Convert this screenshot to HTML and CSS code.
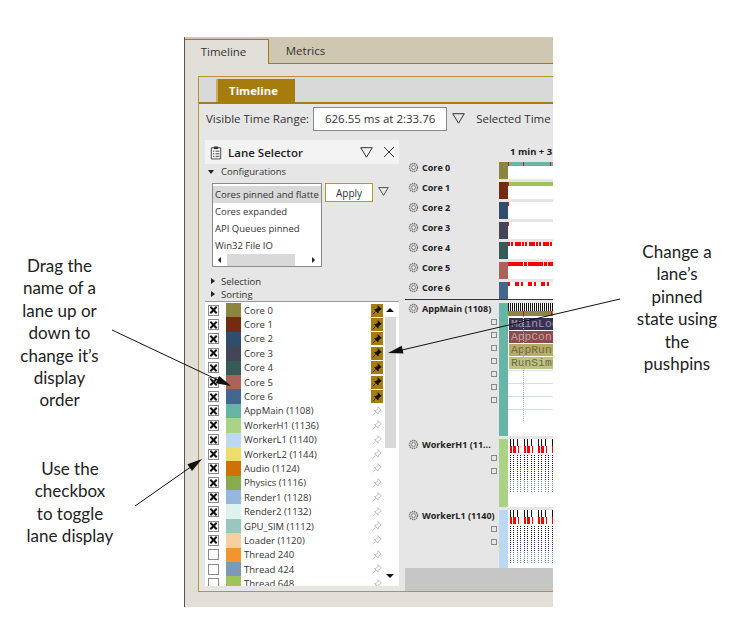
FILE: index.html
```html
<!DOCTYPE html>
<html lang="en">
<head>
<meta charset="utf-8">
<title>Lane Selector</title>
<link rel="stylesheet" href="styles.css">
</head>
<body>
<svg width="0" height="0" class="defs">
  <defs>
    <symbol id="tri" viewBox="0 0 13 11"><path d="M.7.7h11.600L6.500 10.200z" fill="none" stroke="#333" stroke-width="1"/></symbol>
    <symbol id="gear" viewBox="0 0 11 11"><circle cx="5.500" cy="5.500" r="4" fill="none" stroke="#7a7a7a" stroke-width="1.500" stroke-dasharray="1.500 .6"/><circle cx="5.500" cy="5.500" r="2" fill="none" stroke="#7a7a7a" stroke-width=".9"/></symbol>
    <symbol id="pin" viewBox="0 0 11 11"><path d="M6.500.8l3.700 3.700-1.200.5-2 2-.3 1.900-3.900-3.900 1.900-.3 2-2zM3.900 7.100L.8 10.200" fill="currentColor" stroke="currentColor" stroke-width=".8"/></symbol>
    <symbol id="pinoff" viewBox="0 0 11 11"><path d="M6.500.8l3.700 3.700-1.200.5-2 2-.3 1.900-3.900-3.900 1.900-.3 2-2zM3.900 7.100L.8 10.200" fill="none" stroke="#aaa" stroke-width=".8"/></symbol>
  </defs>
</svg>

<main class="shell">
  <nav class="doc-tabs">
    <div class="doc-tab active">Timeline</div>
    <div class="doc-tab">Metrics</div>
  </nav>
  <div class="doc-body">
    <section class="panel">
      <div class="panel-tabs"><div class="panel-tab">Timeline</div></div>
      <div class="toolbar">
        <span>Visible Time Range:</span>
        <div class="range-input">626.55 ms at 2:33.76</div>
        <svg class="tri"><use href="#tri"/></svg>
        <span class="selected">Selected Time</span>
      </div>
      <div class="workspace">
        <aside class="selector">
          <header class="sel-head">
            <svg class="clip" viewBox="0 0 14 16"><path d="M1.500 2.500h11v13h-11z" fill="none" stroke="#333"/><path d="M4.500 1h5v3h-5z" fill="#333"/><path d="M3.500 6.500h1.500M3.500 9.500h1.500M3.500 12.500h1.500M6.500 6.500h4.500M6.500 9.500h4.500M6.500 12.500h4.500" stroke="#333"/></svg>
            <strong>Lane Selector</strong>
            <svg class="tri"><use href="#tri"/></svg>
            <svg class="close" viewBox="0 0 12 12"><path d="M1 1l10 10M11 1L1 11" stroke="#333" fill="none"/></svg>
          </header>
          <div class="expander open"><i class="caret-down"></i>Configurations</div>
          <div class="config">
            <div class="config-list">
              <div class="config-item current">Cores pinned and flatte</div>
              <div class="config-item">Cores expanded</div>
              <div class="config-item">API Queues pinned</div>
              <div class="config-item">Win32 File IO</div>
              <div class="hscroll"><i class="arrow-left"></i><b></b><i class="arrow-right"></i></div>
            </div>
            <button class="apply">Apply</button>
            <svg class="tri small"><use href="#tri"/></svg>
          </div>
          <div class="expander first"><i class="caret-right"></i>Selection</div>
          <div class="expander"><i class="caret-right"></i>Sorting</div>
          <div class="lane-list">
            <div class="rows">
              <div class="row"><span class="check on"></span><span class="swatch c0"></span><span class="name">Core 0</span><span class="pin on"><svg><use href="#pin"/></svg></span></div>
              <div class="row"><span class="check on"></span><span class="swatch c1"></span><span class="name">Core 1</span><span class="pin on"><svg><use href="#pin"/></svg></span></div>
              <div class="row"><span class="check on"></span><span class="swatch c2"></span><span class="name">Core 2</span><span class="pin on"><svg><use href="#pin"/></svg></span></div>
              <div class="row"><span class="check on"></span><span class="swatch c3"></span><span class="name">Core 3</span><span class="pin on"><svg><use href="#pin"/></svg></span></div>
              <div class="row"><span class="check on"></span><span class="swatch c4"></span><span class="name">Core 4</span><span class="pin on"><svg><use href="#pin"/></svg></span></div>
              <div class="row"><span class="check on"></span><span class="swatch c5"></span><span class="name">Core 5</span><span class="pin on"><svg><use href="#pin"/></svg></span></div>
              <div class="row"><span class="check on"></span><span class="swatch c6"></span><span class="name">Core 6</span><span class="pin on"><svg><use href="#pin"/></svg></span></div>
              <div class="row"><span class="check on"></span><span class="swatch c7"></span><span class="name">AppMain (1108)</span><span class="pin"><svg><use href="#pinoff"/></svg></span></div>
              <div class="row"><span class="check on"></span><span class="swatch c8"></span><span class="name">WorkerH1 (1136)</span><span class="pin"><svg><use href="#pinoff"/></svg></span></div>
              <div class="row"><span class="check on"></span><span class="swatch c9"></span><span class="name">WorkerL1 (1140)</span><span class="pin"><svg><use href="#pinoff"/></svg></span></div>
              <div class="row"><span class="check on"></span><span class="swatch c10"></span><span class="name">WorkerL2 (1144)</span><span class="pin"><svg><use href="#pinoff"/></svg></span></div>
              <div class="row"><span class="check on"></span><span class="swatch c11"></span><span class="name">Audio (1124)</span><span class="pin"><svg><use href="#pinoff"/></svg></span></div>
              <div class="row"><span class="check on"></span><span class="swatch c12"></span><span class="name">Physics (1116)</span><span class="pin"><svg><use href="#pinoff"/></svg></span></div>
              <div class="row"><span class="check on"></span><span class="swatch c13"></span><span class="name">Render1 (1128)</span><span class="pin"><svg><use href="#pinoff"/></svg></span></div>
              <div class="row"><span class="check on"></span><span class="swatch c14"></span><span class="name">Render2 (1132)</span><span class="pin"><svg><use href="#pinoff"/></svg></span></div>
              <div class="row"><span class="check on"></span><span class="swatch c15"></span><span class="name">GPU_SIM (1112)</span><span class="pin"><svg><use href="#pinoff"/></svg></span></div>
              <div class="row"><span class="check on"></span><span class="swatch c16"></span><span class="name">Loader (1120)</span><span class="pin"><svg><use href="#pinoff"/></svg></span></div>
              <div class="row"><span class="check"></span><span class="swatch c17"></span><span class="name">Thread 240</span><span class="pin"><svg><use href="#pinoff"/></svg></span></div>
              <div class="row"><span class="check"></span><span class="swatch c18"></span><span class="name">Thread 424</span><span class="pin"><svg><use href="#pinoff"/></svg></span></div>
              <div class="row"><span class="check"></span><span class="swatch c19"></span><span class="name">Thread 648</span><span class="pin"><svg><use href="#pinoff"/></svg></span></div>
            </div>
            <div class="vscroll"><i class="arrow-up"></i><b></b><i class="arrow-down"></i></div>
          </div>
        </aside>
        <div class="timeline">
          <div class="ruler">1 min + 3</div>
          <div class="pinned">
            <div class="lane core"><div class="lane-label"><svg class="gear"><use href="#gear"/></svg><span>Core 0</span></div><span class="bar c0"></span><div class="track"><div class="strip s-teal"></div></div></div>
            <div class="lane core"><div class="lane-label"><svg class="gear"><use href="#gear"/></svg><span>Core 1</span></div><span class="bar c1"></span><div class="track"><div class="strip s-green"></div></div></div>
            <div class="lane core"><div class="lane-label"><svg class="gear"><use href="#gear"/></svg><span>Core 2</span></div><span class="bar c2"></span><div class="track"><div class="strip s-tick"></div></div></div>
            <div class="lane core"><div class="lane-label"><svg class="gear"><use href="#gear"/></svg><span>Core 3</span></div><span class="bar c3"></span><div class="track"><div class="strip s-tick"></div></div></div>
            <div class="lane core"><div class="lane-label"><svg class="gear"><use href="#gear"/></svg><span>Core 4</span></div><span class="bar c4"></span><div class="track"><div class="strip s-red a"></div></div></div>
            <div class="lane core"><div class="lane-label"><svg class="gear"><use href="#gear"/></svg><span>Core 5</span></div><span class="bar c5"></span><div class="track"><div class="strip s-red b"></div></div></div>
            <div class="lane core"><div class="lane-label"><svg class="gear"><use href="#gear"/></svg><span>Core 6</span></div><span class="bar c6"></span><div class="track"><div class="strip s-red c"></div></div></div>
          </div>
          <div class="threads">
            <div class="lane main-lane">
              <div class="lane-label"><svg class="gear"><use href="#gear"/></svg><span>AppMain (1108)</span></div>
              <div class="boxes"><i></i><i></i><i></i><i></i><i></i><i></i><i></i></div>
              <span class="bar c7"></span>
              <div class="track main-track">
                <div class="ticks"></div>
                <div class="olive"></div>
                <div class="stack">
                  <div class="block b1">MainLoop</div>
                  <div class="block b2">AppConfig</div>
                  <div class="block b3">AppRun</div>
                  <div class="block b4">RunSimulation</div>
                </div>
                <div class="grid-lines"></div>
              </div>
            </div>
            <div class="lane wh">
              <div class="lane-label"><svg class="gear"><use href="#gear"/></svg><span>WorkerH1 (11...</span></div>
              <div class="boxes"><i></i><i></i></div>
              <span class="bar c8"></span>
              <div class="track"><div class="sparse"></div><div class="reds"></div><div class="dots"></div></div>
            </div>
            <div class="lane wl">
              <div class="lane-label"><svg class="gear"><use href="#gear"/></svg><span>WorkerL1 (1140)</span></div>
              <div class="boxes"><i></i><i></i></div>
              <span class="bar c9"></span>
              <div class="track"><div class="sparse"></div><div class="reds"></div><div class="dots"></div></div>
            </div>
          </div>
          <div class="tail"></div>
        </div>
      </div>
    </section>
  </div>
</main>

<p class="note n1">Drag the<br>name of a<br>lane up or<br>down to<br>change it’s<br>display<br>order</p>
<p class="note n2">Use the<br>checkbox<br>to toggle<br>lane display</p>
<p class="note n3">Change a<br>lane’s<br>pinned<br>state using<br>the<br>pushpins</p>

<svg class="arrows" viewBox="0 0 743 621">
  <g stroke="#111" stroke-width="1" fill="#111">
    <path d="M112 330L218 380" fill="none"/><path d="M231 386l-15.300-2.800 3.400-7.200z" stroke="none"/>
    <path d="M135 506L190 467.500" fill="none"/><path d="M202 459l-10 11.900-4.600-6.600z" stroke="none"/>
    <path d="M620 299L402 350" fill="none"/><path d="M388 353l13.700-7.300 1.800 7.800z" stroke="none"/>
  </g>
</svg>
</body>
</html>
```

FILE: styles.css
```css
* { box-sizing: border-box; }
html, body { margin: 0; padding: 0; }
body {
  width: 743px;
  height: 621px;
  overflow: hidden;
  background: #fff;
  position: relative;
  font-family: "Open Sans", "Noto Sans", sans-serif;
  font-size: 10.500px;
  color: #222;
}
.defs { position: absolute; }

.shell {
  margin: 37px 0 0 184px;
  width: 369px;
  height: 570px;
  display: flex;
  flex-direction: column;
  border-left: 1px solid #555;
}
.doc-tabs {
  flex: none;
  height: 27px;
  display: flex;
  align-items: flex-end;
  background: #cfc7b2;
  border-bottom: 1px solid #a67c0e;
}
.doc-tab {
  width: 73px;
  height: 25px;
  line-height: 23px;
  text-align: center;
  font-size: 11.500px;
  color: #333;
  margin-bottom: -1px;
}
.doc-tab.active {
  width: 84px;
  padding-right: 6px;
  background: #e2dfd9;
  border: 1px solid #a67c0e;
  border-left: 0;
  border-bottom: 0;
}
.doc-body {
  flex: 1;
  background: #e2dfd9;
  padding: 12px 0 15px 13px;
  min-height: 0;
}
.panel {
  height: 100%;
  display: flex;
  flex-direction: column;
  border: 1px solid #b8952f;
  border-right: 0;
  background: #e6e6e6;
}
.panel-tabs {
  flex: none;
  height: 27px;
  padding: 2px 0 0 17px;
  background: #d9d9d9;
  border-bottom: 2px solid #a67c0e;
}
.panel-tab {
  width: 79px;
  height: 23px;
  line-height: 23px;
  padding-right: 6px;
  background: #a67c0e;
  color: #fff;
  font-weight: 700;
  font-size: 11.300px;
  text-align: center;
  border-left: 2px solid #c8ac60;
}
.toolbar {
  flex: none;
  height: 29px;
  display: flex;
  align-items: center;
  padding-left: 7px;
  white-space: nowrap;
  overflow: hidden;
  font-size: 11.500px;
  color: #333;
}
.range-input {
  width: 134px;
  height: 24px;
  margin-left: 4px;
  border: 1px solid #8a8a8a;
  background: #fff;
  text-align: center;
  line-height: 22px;
}
.tri { width: 13px; height: 11px; flex: none; }
.toolbar .tri { margin-left: 5px; }
.selected { margin-left: 11px; }

.workspace { flex: 1; display: flex; min-height: 0; }
.selector { width: 206px; flex: none; padding: 7px 6px 0 6px; display: flex; flex-direction: column; }
.sel-head {
  flex: none;
  height: 24px;
  display: flex;
  align-items: center;
  background: #f3f3f3;
  padding: 0 4px 0 5px;
}
.sel-head strong { flex: 1; margin-left: 6px; font-size: 11.500px; font-weight: 600; color: #222; }
.clip { width: 12px; height: 15px; }
.close { width: 12px; height: 12px; margin-left: 10px; }
.expander { flex: none; height: 13px; line-height: 13px; padding-left: 16px; font-size: 9.500px; position: relative; color: #333; }
.expander.open { height: 16px; line-height: 16px; }
.expander.first { margin-top: 8px; }
.caret-down, .caret-right { position: absolute; width: 0; height: 0; }
.caret-down { left: 3px; top: 6px; border: 3px solid transparent; border-top: 4px solid #222; border-bottom: 0; }
.caret-right { left: 6px; top: 3px; border: 3px solid transparent; border-left: 4px solid #222; border-right: 0; }

.config { flex: none; display: flex; align-items: flex-start; margin: 3px 0 0 7px; }
.config-list { width: 110px; height: 84px; border: 1px solid #8a8a8a; background: #fff; padding-top: 2px; flex: none; overflow: hidden; }
.config-item { height: 17px; line-height: 17px; padding-left: 2px; font-size: 9.500px; white-space: nowrap; overflow: hidden; color: #333; }
.config-item.current { background: #d9d9d9; }
.hscroll { height: 12px; position: relative; }
.hscroll b { position: absolute; left: 14px; top: 0; width: 68px; height: 12px; background: #d9d9d9; }
.arrow-left, .arrow-right, .arrow-up, .arrow-down { position: absolute; width: 0; height: 0; border: 3px solid transparent; }
.arrow-left { left: 5px; top: 3px; border-right: 3px solid #222; border-left: 0; }
.arrow-right { right: 6px; top: 3px; border-left: 3px solid #222; border-right: 0; }
.arrow-up { left: 1px; top: 6px; border-width: 4px; border-bottom: 4px solid #111; border-top: 0; }
.arrow-down { left: 1px; bottom: 8px; border-width: 4px; border-top: 4px solid #111; border-bottom: 0; }
.apply {
  width: 48px;
  height: 19px;
  margin-left: 3px;
  padding: 0;
  border: 1px solid #b8952f;
  background: #fff;
  font: inherit;
  font-size: 10px;
  color: #333;
}
.tri.small { width: 11px; height: 9px; margin: 4px 0 0 5px; }

.lane-list {
  flex: none;
  height: 285px;
  border-top: 1px solid #999;
  background: #fff;
  display: flex;
  overflow: hidden;
}
.rows { flex: 1; padding: 1px 0 0 2px; min-width: 0; }
.row { height: 14.400px; display: flex; align-items: center; }
.check { width: 11px; height: 11px; border: 1px solid #8a8a8a; flex: none; position: relative; margin-left: 1px; background: #fff; }
.check.on::before, .check.on::after {
  content: "";
  position: absolute;
  left: 0;
  top: 3.500px;
  width: 9px;
  height: 2px;
  background: #111;
  transform: rotate(45deg);
}
.check.on::after { transform: rotate(-45deg); }
.swatch { width: 15px; height: 14.400px; margin-left: 7px; flex: none; }
.name { flex: 1; margin-left: 3px; font-size: 9.500px; color: #333; white-space: nowrap; }
.pin { width: 12px; height: 13px; display: flex; align-items: center; justify-content: center; margin-right: 2px; flex: none; }
.pin svg { width: 10px; height: 10px; }
.pin.on { background: #a67c0e; color: #111; }
.vscroll { width: 12px; flex: none; position: relative; margin-right: 2px; }
.vscroll b { position: absolute; left: 0; top: 15px; width: 11px; height: 131px; background: #d9d9d9; }

.c0 { background: #8b8540; } .c1 { background: #732c0f; } .c2 { background: #2f4d6c; }
.c3 { background: #454559; } .c4 { background: #365a54; } .c5 { background: #ac6259; }
.c6 { background: #41678f; } .c7 { background: #67b5a6; } .c8 { background: #aad385; }
.c9 { background: #bdd8f2; } .c10 { background: #efdc6c; } .c11 { background: #d07106; }
.c12 { background: #88ab52; } .c13 { background: #95b7dc; } .c14 { background: #dff3ee; }
.c15 { background: #99c7bf; } .c16 { background: #f8cfa3; } .c17 { background: #f2952f; }
.c18 { background: #7e99b5; } .c19 { background: #9ec25c; }

.timeline { flex: 1; min-width: 0; display: flex; flex-direction: column; }
.ruler { flex: none; height: 29px; padding: 12px 0 0 105px; font-weight: 700; font-size: 9.500px; color: #222; white-space: nowrap; overflow: hidden; }
.pinned { flex: none; height: 138px; border-bottom: 1px solid #333; overflow: hidden; }
.threads { flex: none; }
.lane { display: flex; position: relative; }
.lane.core { height: 20px; padding-bottom: 3px; }
.lane-label { position: absolute; left: 3px; top: -1px; display: flex; align-items: center; gap: 3px; font-size: 9px; font-weight: 700; color: #222; white-space: nowrap; }
.gear { width: 11px; height: 11px; flex: none; }
.bar { width: 9px; margin-left: 94px; flex: none; }
.track { flex: 1; background: #fff; min-width: 0; position: relative; overflow: hidden; }
.strip { height: 4px; }
.s-teal { background: linear-gradient(90deg, #f00 0 1px, #67b5a6 1px 15px, #f00 15px 16px, #67b5a6 16px 42px, #f00 42px 43px, #67b5a6 43px); }
.s-green { background: linear-gradient(90deg, #f00 0 1px, #9ec25c 1px); }
.s-tick { background: linear-gradient(90deg, #f00 0 1px, #fff 1px); }
.s-red.a { background: repeating-linear-gradient(90deg, #f00 0 2px, #fff 2px 3px, #f00 3px 5px, #fff 5px 7px, #f00 7px 13px, #fff 13px 14px); }
.s-red.b { background: repeating-linear-gradient(90deg, #f00 0 15px, #fff 15px 16px, #f00 16px 19px, #fff 19px 20px); }
.s-red.c { background: repeating-linear-gradient(90deg, #f00 0 2px, #fff 2px 7px, #f00 7px 11px, #fff 11px 13px); }

.lane.main-lane { height: 136px; margin-top: 3px; padding-bottom: 3px; }
.lane.wh { height: 71px; padding-bottom: 3px; }
.lane.wl { height: 58px; }
.boxes { position: absolute; left: 86px; top: 16px; display: flex; flex-direction: column; gap: 7px; }
.boxes i { display: block; width: 6px; height: 6px; border: 1px solid #8a8a8a; }
.ticks { height: 8px; background: repeating-linear-gradient(90deg, #111 0 1px, #fff 1px 2px); }
.olive { height: 5px; background: linear-gradient(90deg, #8b8540 0 15px, #f00 15px 16px, #8b8540 16px 43px, #f00 43px 44px, #8b8540 44px); }
.stack { margin: 2px 0 0 1px; }
.block {
  height: 12px;
  margin-bottom: 1px;
  padding-left: 2px;
  font: 11.300px/12px "Liberation Mono", monospace;
  white-space: nowrap;
  overflow: hidden;
}
.b1 { background: #3c2f54; color: #9c97a6; }
.b2 { background: #8e4a4d; color: #c79ea0; }
.b3 { background: #b6ad64; color: #6f6b45; }
.b4 { background: #bfc27f; color: #6a6b48; }
.grid-lines { height: 52px; background: repeating-linear-gradient(180deg, #cfe6e0 0 1px, #fff 1px 13px); }
.main-track::after {
  content: "";
  position: absolute;
  left: 15px;
  top: 13px;
  width: 29px;
  height: 105px;
  border-left: 1px dotted #b5b5b5;
  border-right: 1px dotted #b5b5b5;
}
.sparse { height: 7px; background: repeating-linear-gradient(90deg, #111 0 1px, #fff 1px 3px, #111 3px 4px, #fff 4px 7px, #111 7px 8px, #fff 8px 14px); margin-left: 2px; }
.reds { height: 7px; margin-left: 2px; background: repeating-linear-gradient(90deg, #f00 0 2px, #fff 2px 3px, #f00 3px 6px, #fff 6px 8px, #f00 8px 9px, #fff 9px 14px); }
.dots {
  height: 38px;
  margin: 2px 0 0 2px;
  background: linear-gradient(180deg, #111 0 13px, #2a2a90 13px 25px, #6f8f8f 25px);
  -webkit-mask: repeating-linear-gradient(180deg, #000 0 1px, transparent 1px 2px), repeating-linear-gradient(90deg, #000 0 1px, transparent 1px 3px, #000 3px 4px, transparent 4px 7px);
  -webkit-mask-composite: source-in;
  mask-composite: intersect;
}
.tail { flex: 1; background: #c6c6c6; }

.note {
  position: absolute;
  margin: 0;
  text-align: center;
  font-family: Lato, "Open Sans", sans-serif;
  font-size: 17px;
  line-height: 22.400px;
  color: #222;
}
.n1 { left: 0; top: 255px; width: 119px; }
.n2 { left: 10px; top: 458px; width: 120px; }
.n3 { left: 617px; top: 241px; width: 120px; }
.arrows { position: absolute; left: 0; top: 0; width: 743px; height: 621px; pointer-events: none; }
```
